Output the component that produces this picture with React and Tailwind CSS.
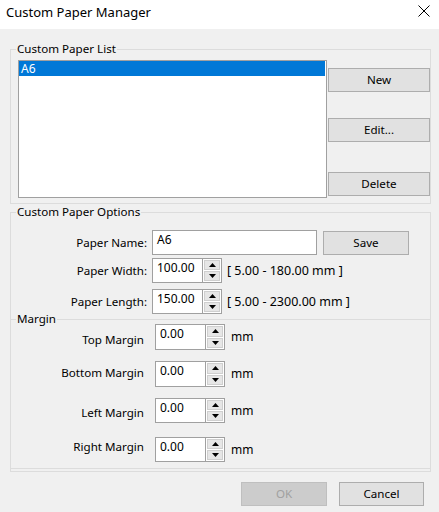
import React from "react";

const FONT = { fontFamily: '"Noto Sans", "Segoe UI", sans-serif' };

function Btn({ children, className = "", disabled = false }) {
  return (
    <div
      className={
        "flex items-center justify-center h-[24px] text-[11.6px] leading-[16px] border " +
        (disabled
          ? "bg-[#cccccc] border-[#bfbfbf] text-[#a0a0a0] "
          : "bg-[#e1e1e1] border-[#adadad] text-black ") +
        className
      }
    >
      {children}
    </div>
  );
}

function UpArrow() {
  return (
    <svg width="7" height="4" viewBox="0 0 7 4">
      <polygon points="3.5,0 7,4 0,4" fill="#000" />
    </svg>
  );
}
function DownArrow() {
  return (
    <svg width="7" height="4" viewBox="0 0 7 4">
      <polygon points="0,0 7,0 3.5,4" fill="#000" />
    </svg>
  );
}

function Spin({ value, h = "h-[25px]" }) {
  return (
    <div className={"flex w-[70px] " + h}>
      <div className="w-[51px] h-full border border-[#a0a0a0] bg-white pl-[4px] pt-px text-[12px] leading-[16px] text-black">
        {value}
      </div>
      <div className="w-[19px] h-full flex flex-col border-y border-r border-[#a0a0a0] bg-white p-px gap-px">
        <div className="flex-1 flex items-center justify-center bg-[#e6e6e6] border border-[#cfcfcf]">
          <UpArrow />
        </div>
        <div className="flex-1 flex items-center justify-center bg-[#e6e6e6] border border-[#cfcfcf]">
          <DownArrow />
        </div>
      </div>
    </div>
  );
}

function MarginRow({ label, labelClass, rowClass, h = "h-[26px]" }) {
  return (
    <div className={"flex items-start " + rowClass}>
      <div className={"w-[133px] text-right text-[11.6px] leading-[16px] text-black " + labelClass}>
        {label}
      </div>
      <div className="ml-[11px]">
        <Spin value="0.00" h={h} />
      </div>
      <div className="ml-[6px] self-center text-[12px] leading-[16px] text-black">mm</div>
    </div>
  );
}

export default function App() {
  return (
    <div className="w-[439px] h-[512px] bg-[#f0f0f0] overflow-hidden" style={FONT}>
      {/* Title bar */}
      <div className="h-[29px] bg-white flex items-start justify-between pl-[6px] pr-[9px]">
        <div className="mt-[2px] text-[13px] leading-[20px] text-black">Custom Paper Manager</div>
        <svg className="mt-[5px]" width="12" height="12" viewBox="0 0 12 12">
          <path d="M0.5 0.5 L11.5 11.5 M11.5 0.5 L0.5 11.5" stroke="#000" strokeWidth="1" fill="none" />
        </svg>
      </div>

      <div className="pl-[10px]">
        {/* Group 1 */}
        <fieldset className="mt-[12px] w-[421px] border border-[#dcdcdc] pb-[5px]">
          <legend className="ml-[5px] px-[1px] text-[11.6px] leading-[16px] text-black">Custom Paper List</legend>
          <div className="flex pt-[3px] pl-[7px]">
            <div className="w-[309px] h-[138px] border border-[#a0a0a0] bg-white pr-px">
              <div className="h-[15px] bg-[#0078d7] text-white text-[12px] leading-[15px] pl-[2px]">A6</div>
            </div>
            <div className="ml-px w-[102px] flex flex-col">
              <Btn className="mt-[8px]">New</Btn>
              <Btn className="mt-[26px]">Edit...</Btn>
              <Btn className="mt-[30px]">Delete</Btn>
            </div>
          </div>
        </fieldset>

        {/* Group 2 */}
        <fieldset className="w-[421px] border border-[#dcdcdc] pb-[2px]">
          <legend className="ml-[5px] px-[1px] text-[11.6px] leading-[16px] text-black">Custom Paper Options</legend>

          <div className="mt-[10px] flex items-center h-[25px]">
            <div className="w-[136px] text-right text-[11.6px] leading-[16px] text-black">Paper Name:</div>
            <div className="ml-[5px] w-[165px] h-[25px] border border-[#a0a0a0] bg-white pl-[4px] pt-px text-[12px] leading-[16px] text-black">
              A6
            </div>
            <Btn className="ml-[6px] w-[86px] mt-[1px]">Save</Btn>
          </div>

          <div className="mt-[3px] flex items-center h-[25px]">
            <div className="w-[136px] text-right text-[11.6px] leading-[16px] text-black">Paper Width:</div>
            <div className="ml-[5px]">
              <Spin value="100.00" />
            </div>
            <div className="ml-[5px] text-[12.5px] leading-[16px] text-black">[ 5.00 - 180.00 mm ]</div>
          </div>

          <div className="mt-[6px] flex items-center h-[25px]">
            <div className="w-[136px] text-right text-[11.6px] leading-[16px] text-black">Paper Length:</div>
            <div className="ml-[5px]">
              <Spin value="150.00" />
            </div>
            <div className="ml-[5px] text-[12.5px] leading-[16px] text-black">[ 5.00 - 2300.00 mm ]</div>
          </div>

          {/* Margin header */}
          <div className="flex items-center h-[10px]">
            <div className="w-[5px] h-px bg-[#dcdcdc]" />
            <div className="px-[1px] text-[11.6px] leading-none text-black">Margin</div>
            <div className="flex-1 h-px bg-[#dcdcdc]" />
          </div>

          <MarginRow label="Top Margin" labelClass="mt-[8px]" rowClass="" />
          <MarginRow label="Bottom Margin" labelClass="mt-[4px]" rowClass="mt-[11px]" />
          <MarginRow label="Left Margin" labelClass="mt-[7px]" rowClass="mt-[11px]" h="h-[25px]" />
          <MarginRow label="Right Margin" labelClass="mt-[2px]" rowClass="mt-[14px]" h="h-[25px]" />

          <div className="mt-[6px] h-px bg-[#dcdcdc]" />
        </fieldset>

        {/* Bottom buttons */}
        <div className="mt-[10px] flex justify-end pr-[15px] gap-[12px]">
          <Btn disabled className="w-[86px]">OK</Btn>
          <Btn className="w-[85px]">Cancel</Btn>
        </div>
      </div>
    </div>
  );
}
